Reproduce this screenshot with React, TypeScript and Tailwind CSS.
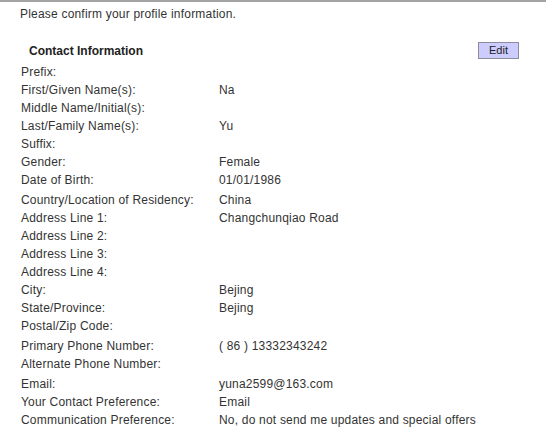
const rows: { label: string; value?: string; tall?: boolean }[] = [
  { label: "Prefix:" },
  { label: "First/Given Name(s):", value: "Na" },
  { label: "Middle Name/Initial(s):" },
  { label: "Last/Family Name(s):", value: "Yu" },
  { label: "Suffix:" },
  { label: "Gender:", value: "Female" },
  { label: "Date of Birth:", value: "01/01/1986" },
  { label: "Country/Location of Residency:", value: "China", tall: true },
  { label: "Address Line 1:", value: "Changchunqiao Road" },
  { label: "Address Line 2:" },
  { label: "Address Line 3:" },
  { label: "Address Line 4:" },
  { label: "City:", value: "Bejing" },
  { label: "State/Province:", value: "Bejing" },
  { label: "Postal/Zip Code:" },
  { label: "Primary Phone Number:", value: "( 86 ) 13332343242", tall: true },
  { label: "Alternate Phone Number:" },
  { label: "Email:", value: "yuna2599@163.com", tall: true },
  { label: "Your Contact Preference:", value: "Email" },
  { label: "Communication Preference:", value: "No, do not send me updates and special offers" },
];

export default function App() {
  return (
    <div className="h-[435px] w-[546px] overflow-hidden border-t-2 border-[#a3a3a3] bg-white font-['Liberation_Sans',Arial,sans-serif] text-[12px] tracking-[0.2px] text-[#333]">
      <div className="pl-[20px] pt-[5px] leading-[14px]">Please confirm your profile information.</div>
      <div className="mt-[21px] flex items-center justify-between pl-[29px] pr-[27px]">
        <span className="text-[12px] font-bold leading-[14px] tracking-normal text-[#222]">Contact Information</span>
        <button className="h-[17px] w-[41px] border border-[#8c8c9c] bg-[#ccccff] text-[11px] leading-[15px] tracking-normal text-[#222]">
          Edit
        </button>
      </div>
      <div className="mt-[4px] pl-[21px]">
        {rows.map((r) => (
          <div key={r.label} className={`flex items-center ${r.tall ? "h-[20px] pt-[2px]" : "h-[18px]"}`}>
            <span className="w-[198px] shrink-0">{r.label}</span>
            <span>{r.value ?? ""}</span>
          </div>
        ))}
      </div>
    </div>
  );
}
